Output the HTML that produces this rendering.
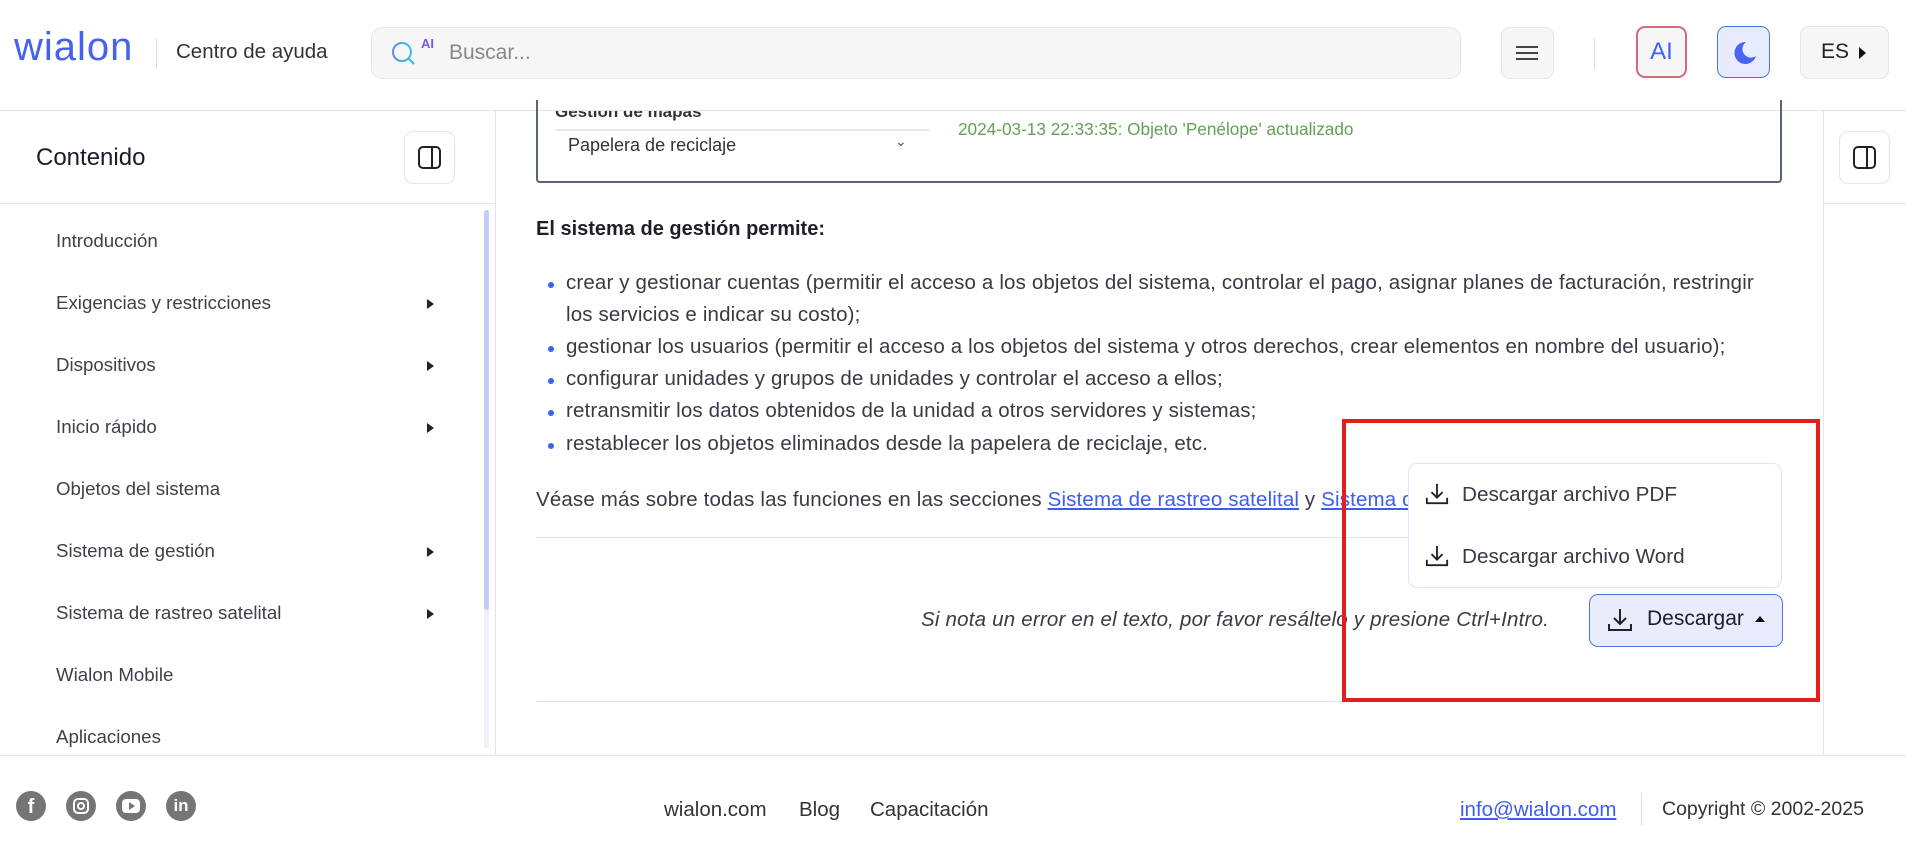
<!DOCTYPE html>
<html><head><meta charset="utf-8"><style>
*{box-sizing:border-box;margin:0;padding:0}
body{width:1906px;height:861px;position:relative;overflow:hidden;background:#fff;font-family:"Liberation Sans",sans-serif;color:#222}
.a{position:absolute}
.btn{position:absolute;border:1px solid #e3e3f2;border-radius:9px;background:#f6f6f6}
.side{color:#3f3f4a;font-size:18.7px;left:56px}
.tri{left:427px;width:0;height:0;border-left:7px solid #222;border-top:5px solid transparent;border-bottom:5px solid transparent}
.li{left:566px;font-size:20.5px;letter-spacing:0.15px;color:#3a3a44;line-height:32px;white-space:nowrap}
.dot{left:548px;width:6px;height:6px;border-radius:50%;background:#3d63e6}
.soc{width:30px;height:30px;border-radius:50%;background:#757575;top:791px}
a{color:#3d5cf0;text-decoration:underline}
</style></head><body>
<!-- header -->
<div class="a" style="left:14px;top:25px;font-size:40px;color:#4462ee;letter-spacing:1px">wialon</div>
<div class="a" style="left:156px;top:38px;width:1px;height:30px;background:#ddd"></div>
<div class="a" style="left:176px;top:40px;font-size:20.5px;color:#333">Centro de ayuda</div>
<div class="btn" style="left:371px;top:27px;width:1090px;height:52px;border-radius:11px"></div>
<svg class="a" style="left:390px;top:40px" width="30" height="30" viewBox="0 0 30 30"><defs><linearGradient id="g" x1="0" x2="1"><stop offset="0" stop-color="#5b8ef0"/><stop offset="1" stop-color="#39c3e8"/></linearGradient></defs><circle cx="12" cy="12" r="9" fill="none" stroke="url(#g)" stroke-width="2"/><path d="M18 18l6 6" stroke="#39b6e8" stroke-width="2"/></svg>
<div class="a" style="left:421px;top:36px;font-size:13px;color:#7b58e8;font-weight:bold">AI</div>
<div class="a" style="left:449px;top:41px;font-size:21px;color:#888">Buscar...</div>
<div class="btn" style="left:1501px;top:27px;width:53px;height:52px"></div>
<div class="a" style="left:1516px;top:46px;width:22px;height:2px;background:#444;box-shadow:0 6px 0 #444,0 12px 0 #444"></div>
<div class="a" style="left:1594px;top:38px;width:1px;height:30px;background:#ddd"></div>
<div class="btn" style="left:1636px;top:26px;width:51px;height:52px;border:2px solid #d36b7c;background:#f6f6f6;color:#3f63ee;font-size:24px;text-align:center;line-height:48px">AI</div>
<div class="btn" style="left:1717px;top:26px;width:53px;height:52px;border:1px solid #4f72f0;background:#e7ebfd"></div>
<svg class="a" style="left:1729px;top:38px" width="30" height="30" viewBox="0 0 30 30"><path d="M17 4a11 11 0 1 0 10 14a8 8 0 0 1 -10 -14z" fill="#4665f0"/></svg>
<div class="btn" style="left:1800px;top:26px;width:89px;height:53px"></div>
<div class="a" style="left:1821px;top:40px;font-size:21px;color:#222">ES</div>
<div class="a" style="left:1859px;top:47px;width:0;height:0;border-left:7px solid #111;border-top:6px solid transparent;border-bottom:6px solid transparent"></div>
<div class="a" style="left:0;top:110px;width:1906px;height:1px;background:#e2e2f4"></div>
<!-- sidebar -->
<div class="a" style="left:495px;top:110px;width:1px;height:645px;background:#e2e2f4"></div>
<div class="a" style="left:36px;top:144px;font-size:24px;color:#1c1c28">Contenido</div>
<div class="btn" style="left:404px;top:131px;width:51px;height:53px;background:#fff"></div>
<div class="a" style="left:418px;top:146px;width:23px;height:23px;border:2px solid #222;border-radius:5px"></div>
<div class="a" style="left:431px;top:146px;width:2px;height:23px;background:#222"></div>
<div class="a" style="left:0;top:203px;width:495px;height:1px;background:#e2e2f4"></div>
<div class="a" style="left:484px;top:210px;width:5px;height:538px;background:#eef0fa;border-radius:3px"></div>
<div class="a" style="left:484px;top:210px;width:5px;height:400px;background:#c3cdf8;border-radius:3px"></div>
<div class="a side" style="top:230px">Introducción</div>
<div class="a side" style="top:292px">Exigencias y restricciones</div><div class="a tri" style="top:299px"></div>
<div class="a side" style="top:354px">Dispositivos</div><div class="a tri" style="top:361px"></div>
<div class="a side" style="top:416px">Inicio rápido</div><div class="a tri" style="top:423px"></div>
<div class="a side" style="top:478px">Objetos del sistema</div>
<div class="a side" style="top:540px">Sistema de gestión</div><div class="a tri" style="top:547px"></div>
<div class="a side" style="top:602px">Sistema de rastreo satelital</div><div class="a tri" style="top:609px"></div>
<div class="a side" style="top:664px">Wialon Mobile</div>
<div class="a side" style="top:726px">Aplicaciones</div>
<!-- right panel -->
<div class="a" style="left:1823px;top:110px;width:1px;height:645px;background:#e2e2f4"></div>
<div class="a" style="left:1824px;top:203px;width:82px;height:1px;background:#e2e2f4"></div>
<div class="btn" style="left:1839px;top:131px;width:51px;height:53px;background:#fff"></div>
<div class="a" style="left:1853px;top:146px;width:23px;height:23px;border:2px solid #222;border-radius:5px"></div>
<div class="a" style="left:1866px;top:146px;width:2px;height:23px;background:#222"></div>
<!-- main -->
<div class="a" style="left:536px;top:100px;width:1246px;height:83px;border:2px solid #59647a;border-top:none;border-radius:0 0 4px 4px"></div>
<div class="a" style="left:555px;top:111px;width:380px;height:10px;overflow:hidden"><div style="font-size:17px;font-weight:bold;color:#333;margin-top:-9px">Gestión de mapas</div></div>
<div class="a" style="left:555px;top:129px;width:375px;height:2px;background:#e8e8e8"></div>
<div class="a" style="left:568px;top:135px;font-size:18px;color:#333">Papelera de reciclaje</div>
<div class="a" style="left:895px;top:133px;font-size:14px;color:#555">⌄</div>
<div class="a" style="left:958px;top:119px;font-size:17.2px;color:#62a155">2024-03-13 22:33:35: Objeto 'Penélope' actualizado</div>
<div class="a" style="left:536px;top:218px;font-size:20px;font-weight:bold;color:#1e1e28">El sistema de gestión permite:</div>
<div class="a dot" style="top:282px"></div>
<div class="a li" style="top:267px">crear y gestionar cuentas (permitir el acceso a los objetos del sistema, controlar el pago, asignar planes de facturación, restringir<br>los servicios e indicar su costo);</div>
<div class="a dot" style="top:346px"></div>
<div class="a li" style="top:331px">gestionar los usuarios (permitir el acceso a los objetos del sistema y otros derechos, crear elementos en nombre del usuario);</div>
<div class="a dot" style="top:378px"></div>
<div class="a li" style="top:363px">configurar unidades y grupos de unidades y controlar el acceso a ellos;</div>
<div class="a dot" style="top:410px"></div>
<div class="a li" style="top:395px">retransmitir los datos obtenidos de la unidad a otros servidores y sistemas;</div>
<div class="a dot" style="top:443px"></div>
<div class="a li" style="top:428px">restablecer los objetos eliminados desde la papelera de reciclaje, etc.</div>
<div class="a li" style="left:536px;top:484px">Véase más sobre todas las funciones en las secciones <a>Sistema de rastreo satelital</a> y <a>Sistema de</a></div>
<div class="a" style="left:536px;top:537px;width:1246px;height:1px;background:#e2e2f4"></div>
<div class="a" style="left:536px;top:701px;width:1246px;height:1px;background:#e2e2f4"></div>
<div class="a" style="right:357px;top:608px;font-size:20.5px;letter-spacing:0.2px;font-style:italic;color:#3a3a44;white-space:nowrap">Si nota un error en el texto, por favor resáltelo y presione Ctrl+Intro.</div>
<div class="a" style="left:1589px;top:594px;width:194px;height:53px;border:1px solid #4f72f0;border-radius:9px;background:#e8ecfd"></div>
<svg class="a" style="left:1607px;top:607px" width="26" height="26" viewBox="0 0 26 26" fill="none" stroke="#222" stroke-width="2"><path d="M13 2v15M7 11l6 6 6-6M2 17v6h22v-6"/></svg>
<div class="a" style="left:1647px;top:607px;font-size:21px;color:#1c1c28">Descargar</div>
<div class="a" style="left:1755px;top:616px;width:0;height:0;border-bottom:6px solid #111;border-left:5px solid transparent;border-right:5px solid transparent"></div>
<div class="a" style="left:1408px;top:463px;width:374px;height:125px;border:1px solid #e2e2f4;border-radius:9px;background:#fff"></div>
<svg class="a" style="left:1425px;top:482px" width="24" height="24" viewBox="0 0 26 26" fill="none" stroke="#222" stroke-width="2"><path d="M13 2v15M7 11l6 6 6-6M2 17v6h22v-6"/></svg>
<div class="a" style="left:1462px;top:483px;font-size:20.7px;color:#3a3a44">Descargar archivo PDF</div>
<svg class="a" style="left:1425px;top:544px" width="24" height="24" viewBox="0 0 26 26" fill="none" stroke="#222" stroke-width="2"><path d="M13 2v15M7 11l6 6 6-6M2 17v6h22v-6"/></svg>
<div class="a" style="left:1462px;top:545px;font-size:20.7px;color:#3a3a44">Descargar archivo Word</div>
<div class="a" style="left:1342px;top:419px;width:478px;height:283px;border:4px solid #e41e20"></div>
<!-- footer -->
<div class="a" style="left:0;top:755px;width:1906px;height:1px;background:#e2e2f4"></div>
<div class="a soc" style="left:16px;color:#fff;font-weight:bold;font-size:20px;text-align:center;line-height:32px">f</div>
<div class="a soc" style="left:66px"><div class="a" style="left:7px;top:7px;width:16px;height:16px;border:2px solid #fff;border-radius:5px"></div><div class="a" style="left:11px;top:11px;width:8px;height:8px;border:2px solid #fff;border-radius:50%"></div></div>
<div class="a soc" style="left:116px"><div class="a" style="left:6px;top:8px;width:18px;height:14px;background:#fff;border-radius:4px"></div><div class="a" style="left:13px;top:11px;border-left:6px solid #757575;border-top:4px solid transparent;border-bottom:4px solid transparent"></div></div>
<div class="a soc" style="left:166px;color:#fff;font-weight:bold;font-size:17px;text-align:center;line-height:30px">in</div>
<div class="a" style="left:664px;top:798px;font-size:20.5px;color:#333">wialon.com</div>
<div class="a" style="left:799px;top:798px;font-size:20.5px;color:#333">Blog</div>
<div class="a" style="left:870px;top:798px;font-size:20.5px;color:#333">Capacitación</div>
<div class="a" style="left:1460px;top:798px;font-size:20.5px"><a>info@wialon.com</a></div>
<div class="a" style="left:1641px;top:793px;width:1px;height:32px;background:#ddd"></div>
<div class="a" style="left:1662px;top:798px;font-size:19.5px;color:#333">Copyright © 2002-2025</div>
</body></html>
